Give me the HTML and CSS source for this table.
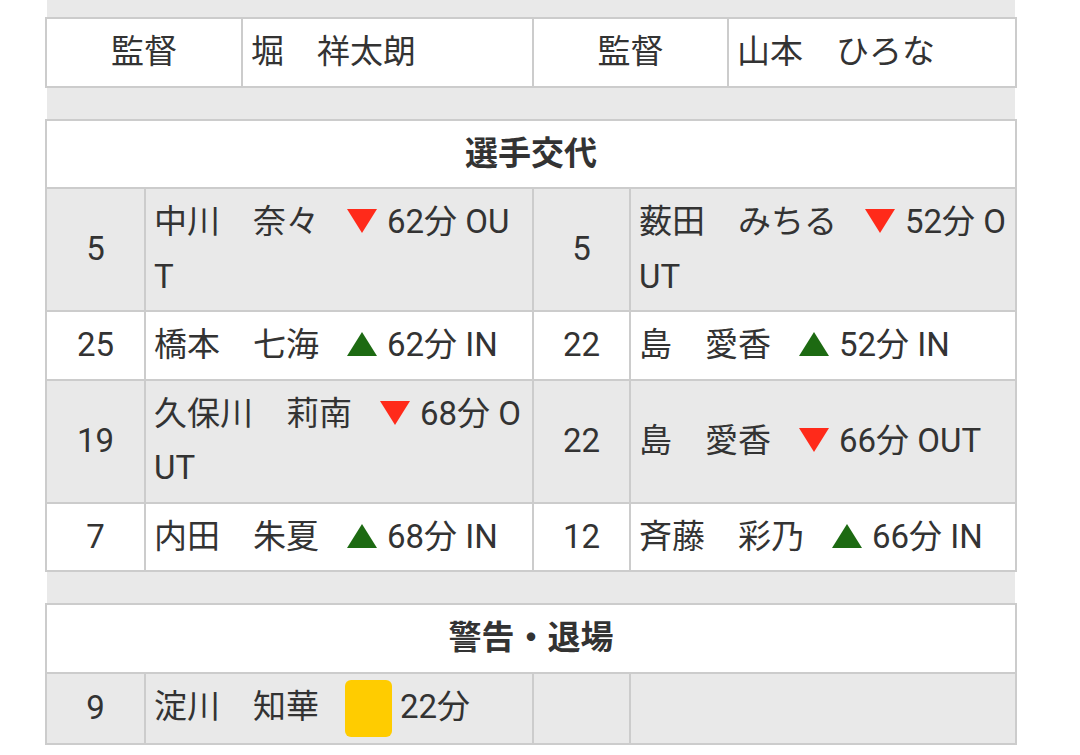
FILE: index.html
```html
<!DOCTYPE html>
<html lang="ja">
<head>
<meta charset="utf-8">
<title>試合記録</title>
<link rel="stylesheet" href="styles.css">
</head>
<body>
<div class="page">
  <table class="grid mgr">
    <colgroup><col class="m1"><col class="m2"><col class="m3"><col class="m4"></colgroup>
    <tr>
      <td class="label">監督</td><td class="name">堀　祥太朗</td>
      <td class="label">監督</td><td class="name">山本　ひろな</td>
    </tr>
  </table>

  <table class="grid">
    <colgroup><col class="s1"><col class="s2"><col class="s3"><col class="s4"></colgroup>
    <tr><th colspan="4">選手交代</th></tr>
    <tr class="alt">
      <td class="num">5</td>
      <td class="name">中川　奈々<span class="tri"><svg width="30" height="24" viewBox="0 0 30 24"><path d="M0 0H30L15 24Z" fill="#ff2a1a"/></svg></span>62分 OUT</td>
      <td class="num">5</td>
      <td class="name">薮田　みちる<span class="tri"><svg width="30" height="24" viewBox="0 0 30 24"><path d="M0 0H30L15 24Z" fill="#ff2a1a"/></svg></span>52分 OUT</td>
    </tr>
    <tr>
      <td class="num">25</td>
      <td class="name">橋本　七海<span class="tri"><svg width="30" height="24" viewBox="0 0 30 24"><path d="M0 24H30L15 0Z" fill="#1d6a12"/></svg></span>62分 IN</td>
      <td class="num">22</td>
      <td class="name">島　愛香<span class="tri"><svg width="30" height="24" viewBox="0 0 30 24"><path d="M0 24H30L15 0Z" fill="#1d6a12"/></svg></span>52分 IN</td>
    </tr>
    <tr class="alt">
      <td class="num">19</td>
      <td class="name">久保川　莉南<span class="tri"><svg width="30" height="24" viewBox="0 0 30 24"><path d="M0 0H30L15 24Z" fill="#ff2a1a"/></svg></span>68分 OUT</td>
      <td class="num">22</td>
      <td class="name">島　愛香<span class="tri"><svg width="30" height="24" viewBox="0 0 30 24"><path d="M0 0H30L15 24Z" fill="#ff2a1a"/></svg></span>66分 OUT</td>
    </tr>
    <tr>
      <td class="num">7</td>
      <td class="name">内田　朱夏<span class="tri"><svg width="30" height="24" viewBox="0 0 30 24"><path d="M0 24H30L15 0Z" fill="#1d6a12"/></svg></span>68分 IN</td>
      <td class="num">12</td>
      <td class="name">斉藤　彩乃<span class="tri"><svg width="30" height="24" viewBox="0 0 30 24"><path d="M0 24H30L15 0Z" fill="#1d6a12"/></svg></span>66分 IN</td>
    </tr>
  </table>

  <table class="grid">
    <colgroup><col class="s1"><col class="s2"><col class="s3"><col class="s4"></colgroup>
    <tr><th colspan="4">警告・退場</th></tr>
    <tr class="alt">
      <td class="num">9</td>
      <td class="name">淀川　知華<span class="card"></span>22分</td>
      <td class="num"></td>
      <td class="name"></td>
    </tr>
  </table>
</div>
</body>
</html>
```

FILE: styles.css
```css
html, body {
  margin: 0;
  padding: 0;
  background: #ffffff;
}

body {
  font-family: Roboto, "Noto Sans CJK JP", sans-serif;
  color: #333333;
  font-size: 33px;
  line-height: 54.5px;
}

.page {
  width: 968px;
  margin-left: 47px;
  padding-top: 17px;
  background: #e9e9e9;
  display: flex;
  flex-direction: column;
  gap: 31px;
}

.grid {
  width: 972px;
  margin: 0 -2px;
  table-layout: fixed;
  border-collapse: separate;
  border-spacing: 0;
  border-top: 2px solid #cccccc;
  border-left: 2px solid #cccccc;
  background: #ffffff;
}

.grid td,
.grid th {
  border-right: 2px solid #cccccc;
  border-bottom: 2px solid #cccccc;
  padding: 6px 8px;
  vertical-align: middle;
  word-break: break-all;
}

.grid th {
  font-weight: 700;
  text-align: center;
  background: #ffffff;
}

.grid tr.alt td {
  background: #e9e9e9;
}

.m1 { width: 196px; }
.m2 { width: 291px; }
.m3 { width: 195px; }
.m4 { width: 288px; }

.s1 { width: 99px; }
.s2 { width: 388px; }
.s3 { width: 97px; }
.s4 { width: 386px; }

.label,
.num {
  text-align: center;
}

.name {
  text-align: left;
}

.tri {
  display: inline-block;
  margin: 0 10px 0 28px;
  width: 30px;
  height: 24px;
  vertical-align: baseline;
}

.tri svg {
  display: block;
}

.card {
  display: inline-block;
  width: 47px;
  height: 57px;
  margin: 0 8px 0 26px;
  background: #ffcc00;
  border-radius: 6px;
  vertical-align: middle;
}
```
